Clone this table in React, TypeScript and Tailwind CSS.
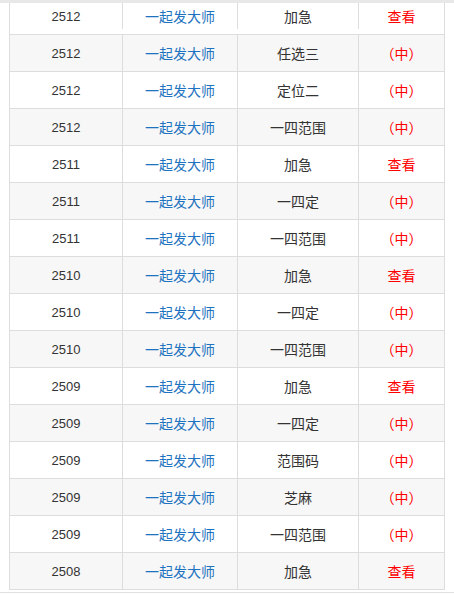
import React from "react";

const rows: [string, string, boolean][] = [
  ["2512", "加急", true],
  ["2512", "任选三", false],
  ["2512", "定位二", false],
  ["2512", "一四范围", false],
  ["2511", "加急", true],
  ["2511", "一四定", false],
  ["2511", "一四范围", false],
  ["2510", "加急", true],
  ["2510", "一四定", false],
  ["2510", "一四范围", false],
  ["2509", "加急", true],
  ["2509", "一四定", false],
  ["2509", "范围码", false],
  ["2509", "芝麻", false],
  ["2509", "一四范围", false],
  ["2508", "加急", true],
];

const cjk = { fontFamily: '"Noto Sans CJK SC", "Liberation Sans", sans-serif' };

export default function App() {
  return (
    <div className="w-[454px] h-[594px] overflow-hidden bg-white">
      <div className="h-[3px] bg-[#e8e8e8]" />
      <div className="ml-[9px] w-[436px] border-l border-r border-[#dddddd]">
        {rows.map(([num, type, look], i) => (
          <div
            key={i}
            className={`grid grid-cols-[113px_115px_121px_85px] border-b border-[#dddddd] ${
              i === 0 ? "h-[32px] pb-[5px]" : "h-[37px]"
            } ${i % 2 === 1 ? "bg-[#f7f7f7]" : "bg-white"}`}
          >
            <div
              className="flex items-center justify-center border-r border-[#dddddd] pt-[2px] text-[13px] text-[#333333]"
              style={{ fontFamily: '"Liberation Sans", Arial, sans-serif' }}
            >
              {num}
            </div>
            <div
              className="flex items-center justify-center border-r border-[#dddddd] text-[14px] text-[#1e73c0]"
              style={cjk}
            >
              一起发大师
            </div>
            <div
              className="flex items-center justify-center border-r border-[#dddddd] text-[14px] text-[#333333]"
              style={cjk}
            >
              {type}
            </div>
            <div
              className="flex items-center justify-center text-[14px] text-[#ff0000]"
              style={cjk}
            >
              {look ? "查看" : "（中）"}
            </div>
          </div>
        ))}
      </div>
      <div className="mt-[2px] h-px bg-[#e0e0e0]" />
    </div>
  );
}
